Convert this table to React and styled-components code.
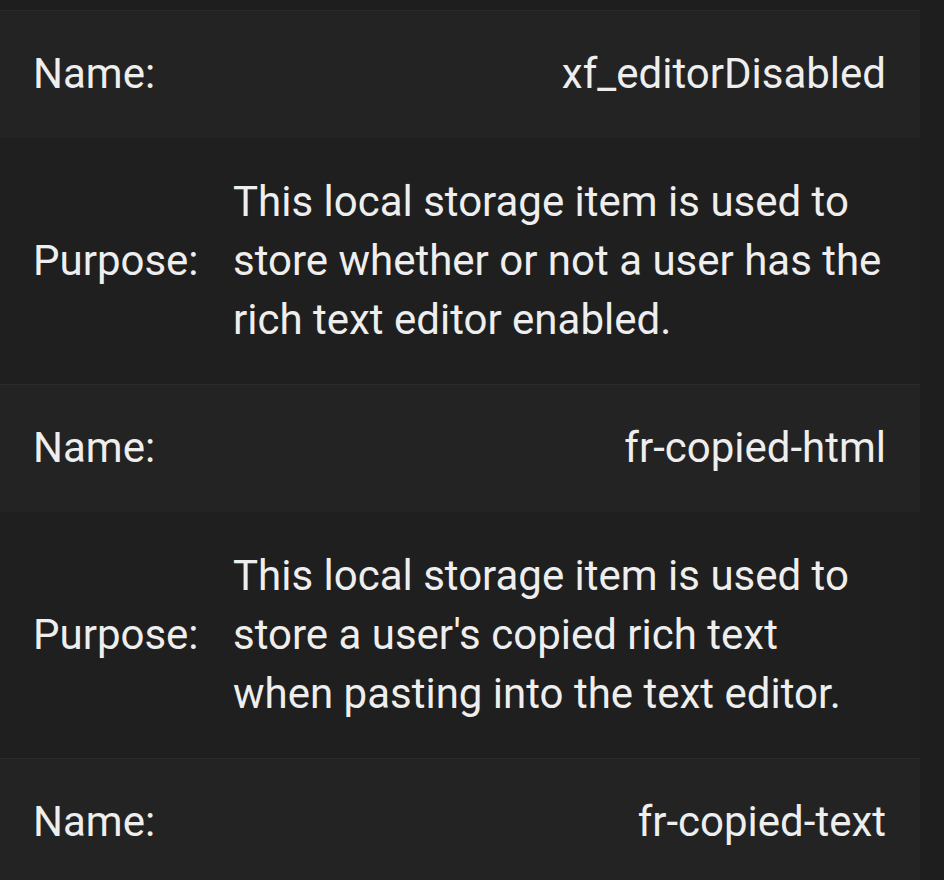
import React from "react";
import styled, { createGlobalStyle } from "styled-components";

const Global = createGlobalStyle`
  html, body { margin: 0; padding: 0; background: #1e1e1e; }
  body { font-family: Roboto, "Liberation Sans", sans-serif; }
`;

const Page = styled.div`
  padding: 10px 24px 0 0;
  background: #1e1e1e;
  min-height: 880px;
  box-sizing: border-box;
`;

const Row = styled.div`
  display: grid;
  grid-template-columns: 200px 1fr;
  align-items: center;
  padding: 33px 34px 35px 33px;
  border-top: 1px solid ${(p) => (p.$striped ? "#2a2a2a" : "#1f1f1f")};
  background: ${(p) => (p.$striped ? "#232323" : "#1f1f1f")};
  color: #eeeeee;
  font-size: 42px;
  line-height: 59px;
`;

const Label = styled.div``;

const Value = styled.div`
  text-align: ${(p) => (p.$right ? "right" : "left")};
`;

const items = [
  {
    name: "xf_editorDisabled",
    purpose:
      "This local storage item is used to store whether or not a user has the rich text editor enabled.",
  },
  {
    name: "fr-copied-html",
    purpose:
      "This local storage item is used to store a user's copied rich text when pasting into the text editor.",
  },
  { name: "fr-copied-text" },
];

export default function App() {
  return (
    <>
      <Global />
      <Page>
        {items.map((it) => (
          <React.Fragment key={it.name}>
            <Row $striped>
              <Label>Name:</Label>
              <Value $right>{it.name}</Value>
            </Row>
            {it.purpose && (
              <Row>
                <Label>Purpose:</Label>
                <Value>{it.purpose}</Value>
              </Row>
            )}
          </React.Fragment>
        ))}
      </Page>
    </>
  );
}
